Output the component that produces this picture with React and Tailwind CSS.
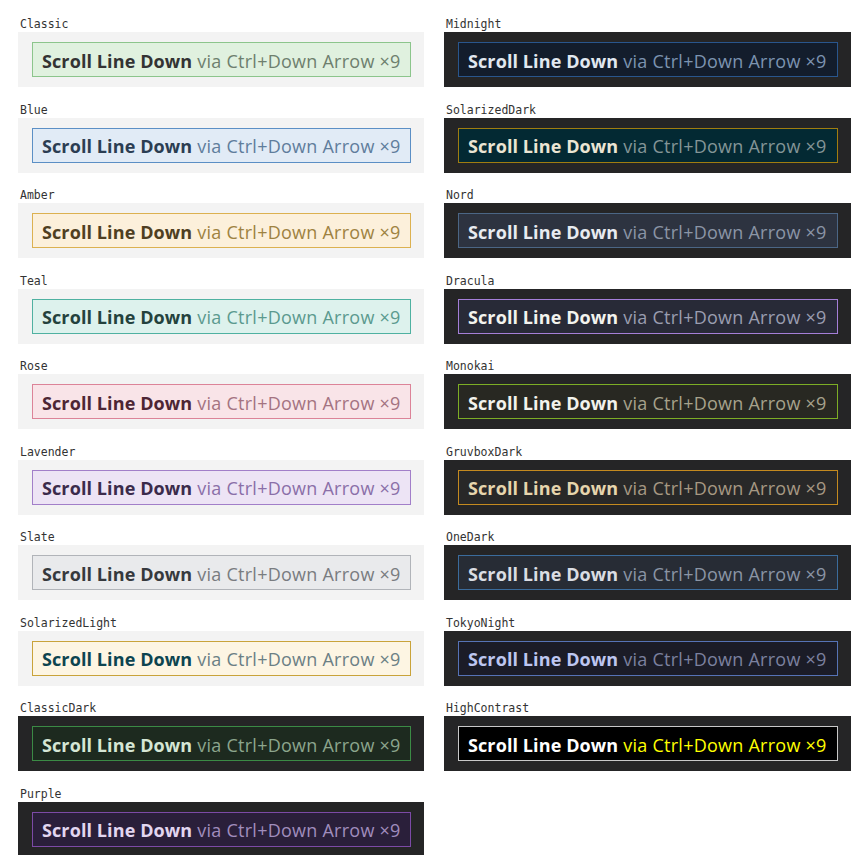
const themes = [
  // left column
  { name: "Classic", panel: "bg-[#f3f3f3]", box: "bg-[#e0f1df] border-[#8cc58c]", strong: "text-[#333333]", soft: "text-[#6e7f6e]" },
  { name: "Blue", panel: "bg-[#f3f3f3]", box: "bg-[#e1ebf6] border-[#5b8fc5]", strong: "text-[#2b3d52]", soft: "text-[#5f7d9c]" },
  { name: "Amber", panel: "bg-[#f3f3f3]", box: "bg-[#fcf0db] border-[#dcb150]", strong: "text-[#4f3f22]", soft: "text-[#9e8241]" },
  { name: "Teal", panel: "bg-[#f3f3f3]", box: "bg-[#ddf2ed] border-[#4fb1a1]", strong: "text-[#24423d]", soft: "text-[#5b9a8f]" },
  { name: "Rose", panel: "bg-[#f3f3f3]", box: "bg-[#f9e4e8] border-[#dc8398]", strong: "text-[#4d2634]", soft: "text-[#a47381]" },
  { name: "Lavender", panel: "bg-[#f3f3f3]", box: "bg-[#ede4f5] border-[#a27fc9]", strong: "text-[#3b2b4b]", soft: "text-[#8a6fa8]" },
  { name: "Slate", panel: "bg-[#f3f3f3]", box: "bg-[#e9eaec] border-[#b1b4b9]", strong: "text-[#36393d]", soft: "text-[#797c80]" },
  { name: "SolarizedLight", panel: "bg-[#f3f3f3]", box: "bg-[#fdf5e3] border-[#c9a33a]", strong: "text-[#0d4450]", soft: "text-[#6b7f85]" },
  { name: "ClassicDark", panel: "bg-[#252526]", box: "bg-[#1d2a1f] border-[#3b8a45]", strong: "text-[#d5e6d5]", soft: "text-[#8ca58d]" },
  { name: "Purple", panel: "bg-[#252526]", box: "bg-[#2a1f3a] border-[#7c4aa6]", strong: "text-[#e2d6f0]", soft: "text-[#a08dbd]" },
  // right column
  { name: "Midnight", panel: "bg-[#252526]", box: "bg-[#131d2c] border-[#29568d]", strong: "text-[#e1e8f0]", soft: "text-[#7c93b0]" },
  { name: "SolarizedDark", panel: "bg-[#252526]", box: "bg-[#032933] border-[#a07d10]", strong: "text-[#ebe5d3]", soft: "text-[#849597]" },
  { name: "Nord", panel: "bg-[#252526]", box: "bg-[#2d3340] border-[#4b6685]", strong: "text-[#e8ebf0]", soft: "text-[#8b95a6]" },
  { name: "Dracula", panel: "bg-[#252526]", box: "bg-[#282a37] border-[#a57fd8]", strong: "text-[#f3f3ee]", soft: "text-[#9a9db0]" },
  { name: "Monokai", panel: "bg-[#252526]", box: "bg-[#282822] border-[#7cad25]", strong: "text-[#f2f2ec]", soft: "text-[#a6a28c]" },
  { name: "GruvboxDark", panel: "bg-[#252526]", box: "bg-[#282828] border-[#c48a1f]", strong: "text-[#e6d5ad]", soft: "text-[#a69883]" },
  { name: "OneDark", panel: "bg-[#252526]", box: "bg-[#272c35] border-[#3b6c9c]", strong: "text-[#dadde3]", soft: "text-[#8b95a5]" },
  { name: "TokyoNight", panel: "bg-[#252526]", box: "bg-[#1b1c27] border-[#5673b6]", strong: "text-[#bdc6f0]", soft: "text-[#7b819f]" },
  { name: "HighContrast", panel: "bg-[#252526]", box: "bg-[#000000] border-[#c8c8c8]", strong: "text-[#ffffff]", soft: "text-[#ffff00]" },
];

function Swatch({ t }) {
  return (
    <div className="flex flex-col">
      <div className="h-[16px] pl-[2px] text-[11.5px] leading-[16px] text-[#333333] [font-family:'DejaVu_Sans_Mono','Liberation_Mono',monospace]">
        {t.name}
      </div>
      <div className={`${t.panel} h-[55px] pl-[14px] pr-[13px] pt-[10px]`}>
        <div className={`${t.box} h-[35px] border flex items-center pl-[9px] pt-[3px] whitespace-nowrap text-[18px] [font-family:'Open_Sans','Noto_Sans',sans-serif]`}>
          <span className={`${t.strong} font-bold tracking-[0.1px]`}>Scroll Line Down</span>
          <span className={`${t.soft} ml-[5px] tracking-[0.25px]`}>via Ctrl+Down Arrow ×9</span>
        </div>
      </div>
    </div>
  );
}

export default function App() {
  const left = themes.slice(0, 10);
  const right = themes.slice(10);
  return (
    <div className="bg-white min-h-[855px] pl-[18px] pt-[16px]">
      <div className="grid grid-cols-[406px_407px] gap-x-[20px] items-start">
        <div className="flex flex-col gap-[14.5px]">
          {left.map((t) => (
            <Swatch key={t.name} t={t} />
          ))}
        </div>
        <div className="flex flex-col gap-[14.5px]">
          {right.map((t) => (
            <Swatch key={t.name} t={t} />
          ))}
        </div>
      </div>
    </div>
  );
}
